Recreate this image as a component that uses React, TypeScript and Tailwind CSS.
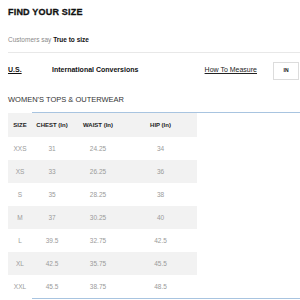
import React from "react";

const rows = [
  { size: "XXS", chest: "31", waist: "24.25", hip: "34" },
  { size: "XS", chest: "33", waist: "26.25", hip: "36" },
  { size: "S", chest: "35", waist: "28.25", hip: "38" },
  { size: "M", chest: "37", waist: "30.25", hip: "40" },
  { size: "L", chest: "39.5", waist: "32.75", hip: "42.5" },
  { size: "XL", chest: "42.5", waist: "35.75", hip: "45.5" },
  { size: "XXL", chest: "45.5", waist: "38.75", hip: "48.5" },
];

const App: React.FC = () => {
  return (
    <div className="h-[300px] w-[300px] overflow-hidden bg-white pl-2 font-['Liberation_Sans',Arial,sans-serif] text-[#111]">
      {/* Title */}
      <div className="h-[28px] pt-[8px]">
        <h1 className="text-[9px] font-bold leading-[9px] tracking-[0.2px] [-webkit-text-stroke:0.3px_#111]">FIND YOUR SIZE</h1>
      </div>

      <div className="flex h-[25px] items-center border-b border-[#e8e8e8] text-[6.5px]">
        <span className="text-[#8a8a8a]">Customers say&nbsp;</span>
        <span className="font-bold">True to size</span>
      </div>

      {/* Units row */}
      <div className="flex h-[35px] items-center text-[7px]">
        <span className="w-[44px] font-bold underline">U.S.</span>
        <span className="font-bold">International Conversions</span>
        <span className="ml-auto text-[#222] underline">How To Measure</span>
        <div className="ml-[16px] mr-[1px] flex h-[18px] w-[26px] items-center justify-center border border-[#dcdcdc] text-[5px] font-bold">
          IN
        </div>
      </div>

      <div className="flex h-[24px] items-center text-[7.5px] text-[#333]">WOMEN'S TOPS &amp; OUTERWEAR</div>

      {/* Size table */}
      <div className="flex">
        <div className="w-[24px] shrink-0 pt-[1px] text-center">
          <div className="flex h-[24px] items-center justify-center bg-[#f2f2f2] text-[6px] font-bold text-[#222]">SIZE</div>
          {rows.map((r, i) => (
            <div
              key={r.size}
              className={`flex h-[23px] items-center justify-center text-[6.5px] text-[#9a9a9a] ${i % 2 === 1 ? "bg-[#f2f2f2]" : "bg-white"}`}
            >
              {r.size}
            </div>
          ))}
        </div>
        <div className="flex-1 border-y border-[#a8c4e0]">
          <div className="flex h-[24px] w-[165px] items-center bg-[#f2f2f2] text-[6px] font-bold text-[#222]">
            <span className="w-[40px] text-center">CHEST (In)</span>
            <span className="w-[52px] text-center">WAIST (In)</span>
            <span className="w-[73px] text-center">HIP (In)</span>
          </div>
          {rows.map((r, i) => (
            <div
              key={r.size}
              className={`flex h-[23px] w-[165px] items-center text-[6.5px] text-[#9a9a9a] ${i % 2 === 1 ? "bg-[#f2f2f2]" : "bg-white"}`}
            >
              <span className="w-[40px] text-center">{r.chest}</span>
              <span className="w-[52px] text-center">{r.waist}</span>
              <span className="w-[73px] text-center">{r.hip}</span>
            </div>
          ))}
        </div>
      </div>
    </div>
  );
};

export default App;
